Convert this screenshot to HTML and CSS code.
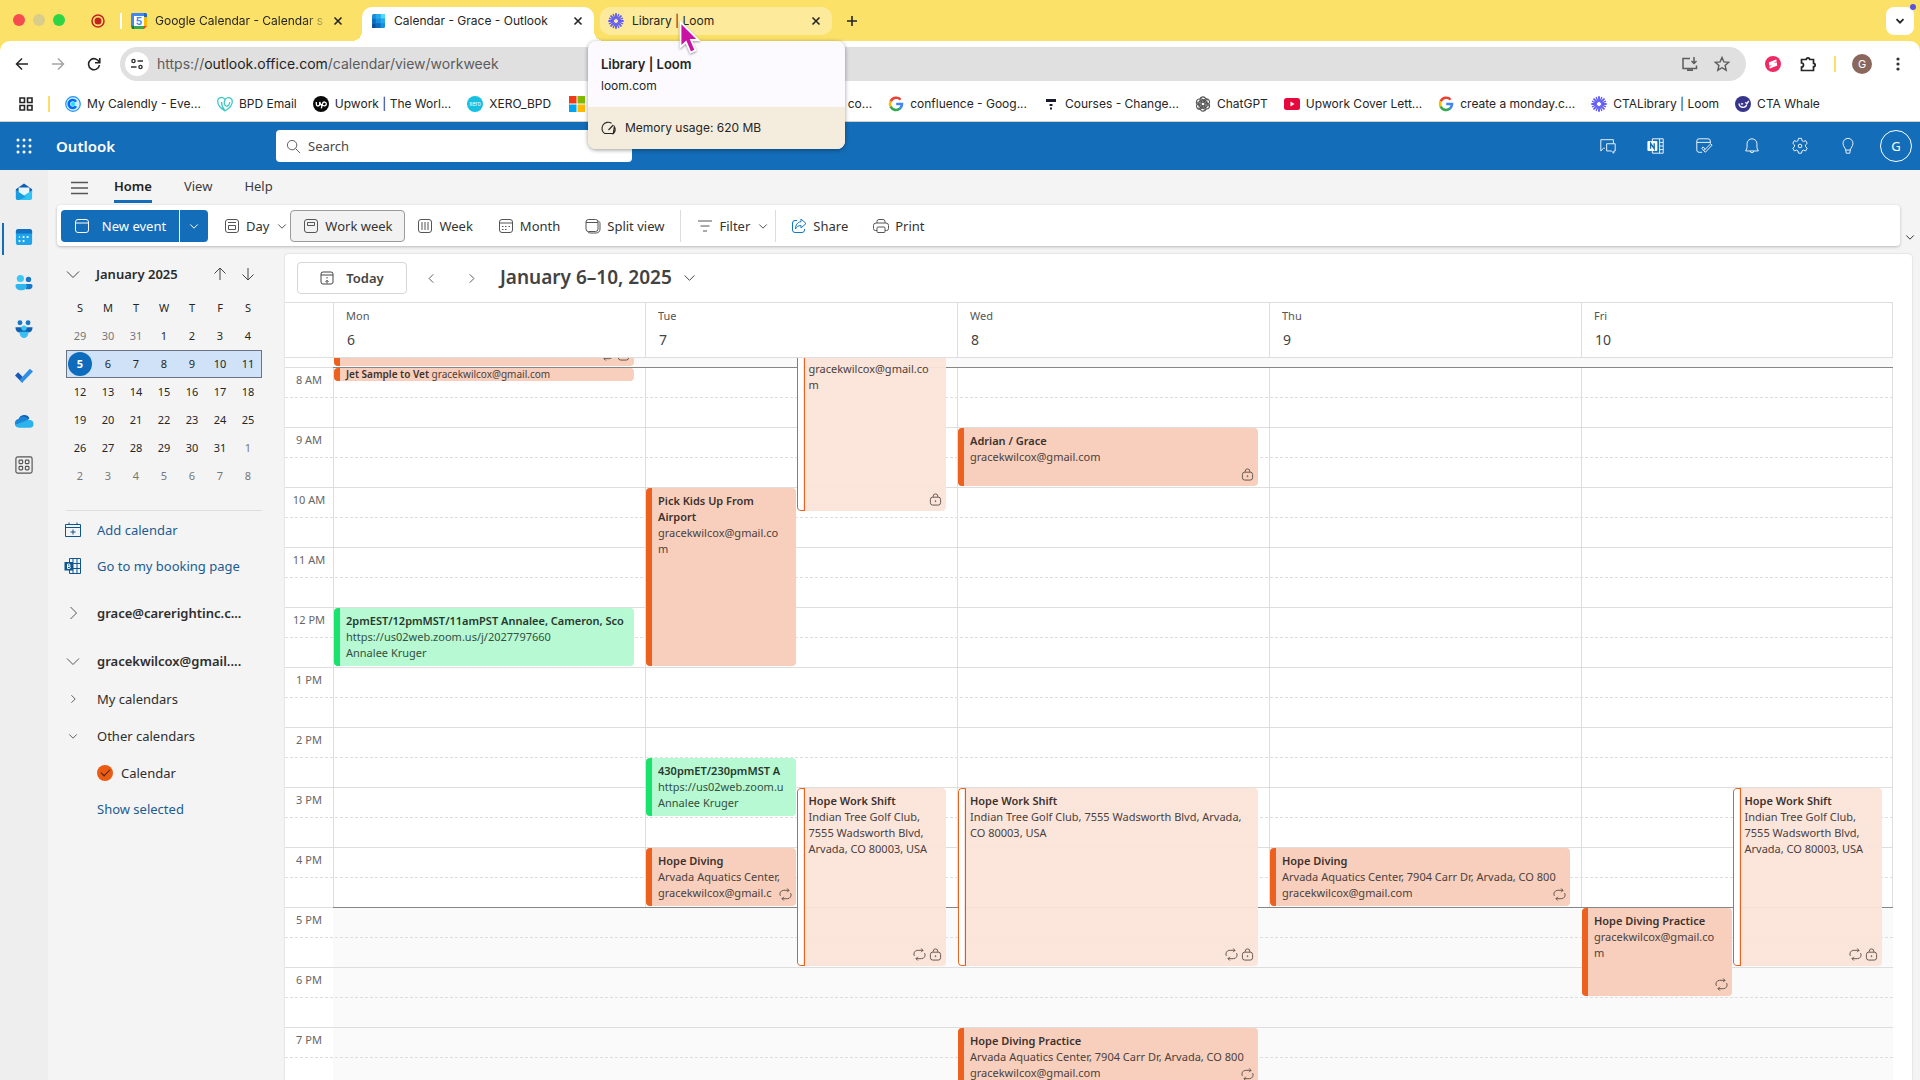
FILE: index.html
```html
<!DOCTYPE html>
<html lang="en">
<head>
<meta charset="utf-8">
<meta name="viewport" content="width=device-width, initial-scale=1">
<title>Calendar - Grace - Outlook</title>
<link rel="stylesheet" href="styles.css">
</head>
<body>
<svg class="sprite" aria-hidden="true">
  <symbol id="i-close" viewBox="0 0 10 10"><path d="M1.5 1.5l7 7M8.5 1.5l-7 7" stroke-width="1.6"/></symbol>
  <symbol id="i-loom" viewBox="0 0 16 16"><g stroke="#625df5" stroke-width="1.9" stroke-linecap="round" fill="none"><path d="M8 1v4.2M8 10.8V15M1 8h4.2M10.800 8H15M3.050 3.050l3 3M9.950 9.950l3 3M3.050 12.950l3-3M9.950 6.050l3-3"/><path stroke-width="1.400" d="M5.300 1.500l1.500 3.700M9.200 10.800l1.500 3.700M1.500 10.700l3.700-1.500M10.800 6.800l3.700-1.500M1.500 5.300l3.700 1.500M10.800 9.200l3.700 1.500M5.300 14.500l1.500-3.700M9.200 5.200l1.500-3.700"/></g></symbol>
  <symbol id="i-google" viewBox="0 0 16 16"><g fill="none" stroke-width="2.600"><path stroke="#ea4335" d="M12.600 3.600A6 6 0 0 0 2.700 5.400"/><path stroke="#fbbc05" d="M2.800 5.200a6 6 0 0 0 0 5.600"/><path stroke="#34a853" d="M2.700 10.600a6 6 0 0 0 9.300 2"/><path stroke="#4285f4" d="M11.800 12.700A6 6 0 0 0 14 8H8.200"/></g></symbol>
  <symbol id="i-down" viewBox="0 0 16 16"><path d="M2 5.500l6 6 6-6"/></symbol>
  <symbol id="i-right" viewBox="0 0 16 16"><path d="M5.500 2l6 6-6 6"/></symbol>
  <symbol id="i-left" viewBox="0 0 16 16"><path d="M10.500 2l-6 6 6 6"/></symbol>
  <symbol id="i-repeat" viewBox="0 0 14 14"><path d="M8.800.500l2 2-2 2M10.800 2.500H5A4 4 0 0 0 1.500 8.500M5.200 13.500l-2-2 2-2M3.200 11.500H9a4 4 0 0 0 3.500-6"/></symbol>
  <symbol id="i-lock" viewBox="0 0 14 14"><path d="M4.500 4.500V3.500a2.500 2.500 0 0 1 5 0v1"/><rect x="1.500" y="4.500" width="11" height="8.500" rx="2.500"/><circle cx="7" cy="8.800" r=".5"/></symbol>
  <symbol id="i-calbox" viewBox="0 0 16 16"><rect x="1.500" y="1.500" width="13" height="13" rx="2.500"/></symbol>
</svg>

<div class="browser">
  <header class="tabstrip">
    <div class="lights"><i class="light light--red"></i><i class="light light--dim"></i><i class="light light--green"></i></div>
    <svg class="record" viewBox="0 0 14 14"><circle cx="7" cy="7" r="6" fill="none" stroke="#c4221f" stroke-width="1.500"/><circle cx="7" cy="7" r="3.500" fill="#c4221f" stroke="none"/></svg>
    <div class="tab tab--first">
      <svg class="favicon" viewBox="0 0 16 16"><path fill="#4285f4" d="M1 0h12v3H3v10H0V1z"/><path fill="#1967d2" d="M13 0h2l1 1v3h-3z"/><path fill="#fbbc04" d="M13 4h3v9h-3z"/><path fill="#34a853" d="M3 13h10v3H3z"/><path fill="#188038" d="M0 13h3v3H1z"/><path fill="#ea4335" d="M13 13h3l-3 3z"/><path fill="#fff" d="M3 3h10v10H3z"/><text x="8" y="11.500" text-anchor="middle" font-size="10" font-weight="700" fill="#4285f4">5</text></svg>
      <span class="tab__title tab__title--fade">Google Calendar - Calendar s</span>
      <button class="tab__close" aria-label="Close tab"><svg><use href="#i-close"/></svg></button>
    </div>
    <div class="tab tab--active">
      <svg class="favicon" viewBox="0 0 16 16"><rect x="2" y="1" width="13" height="14" rx="1.500" fill="#1490df"/><path fill="#50d9ff" d="M10.500 1H15v4.700h-4.500z"/><path fill="#28a8ea" d="M5.800 1h4.700v4.700H5.800zM10.500 5.700H15v4.600h-4.500z"/><path fill="#0a4f9e" d="M2 10.300h3.800V15H2z"/><path fill="#0f6cbd" d="M2 5.700h3.800v4.600H2zM5.800 10.300h4.700V15H5.800z"/></svg>
      <span class="tab__title">Calendar - Grace - Outlook</span>
      <button class="tab__close" aria-label="Close tab"><svg><use href="#i-close"/></svg></button>
    </div>
    <div class="tab tab--hover">
      <svg class="favicon"><use href="#i-loom"/></svg>
      <span class="tab__title">Library | Loom</span>
      <button class="tab__close" aria-label="Close tab"><svg><use href="#i-close"/></svg></button>
    </div>
    <button class="newtab" aria-label="New tab"><svg viewBox="0 0 12 12"><path d="M6 1v10M1 6h10" stroke-width="1.600"/></svg></button>
    <button class="tabsearch" aria-label="Search tabs"><svg viewBox="0 0 10 10"><path d="M1.500 3.200L5 6.700l3.500-3.500" stroke-width="1.800"/></svg></button>
  </header>

  <div class="toolbar">
    <button class="nav" aria-label="Back"><svg viewBox="0 0 14 14"><path d="M13 7H1.500M7 1.500L1.500 7 7 12.500" stroke-width="1.500"/></svg></button>
    <button class="nav nav--off" aria-label="Forward"><svg viewBox="0 0 14 14"><path d="M1 7h11.500M7 1.500L12.500 7 7 12.500" stroke-width="1.500"/></svg></button>
    <button class="nav" aria-label="Reload"><svg viewBox="0 0 14 14"><path d="M12.300 5.500A5.500 5.500 0 1 0 12.500 8M12.800 1v4.800H8" stroke-width="1.600"/></svg></button>
    <div class="urlbar">
      <button class="site" aria-label="Site information"><svg viewBox="0 0 14 14"><circle cx="3.500" cy="4" r="1.600" stroke-width="1.400"/><path d="M7.500 4H13M1 10h5.500" stroke-width="1.600"/><circle cx="10.500" cy="10" r="1.600" stroke-width="1.400"/></svg></button>
      <span class="url">https://<b>outlook.office.com</b>/calendar/view/workweek</span>
      <button class="urlicon" aria-label="Install Outlook"><svg viewBox="0 0 16 16"><path d="M8 2.500H1v10h13.500V9.500M12 1v6M9.500 5L12 7.500 14.500 5" stroke-width="1.500"/><path d="M5 13.200h6v1.800H5z" fill="currentColor" stroke="none"/></svg></button>
      <button class="urlicon" aria-label="Bookmark this page"><svg viewBox="0 0 16 16"><path d="M8 1.500l1.900 4.400 4.800.4-3.600 3.200 1.100 4.700L8 11.700l-4.200 2.500 1.100-4.700-3.600-3.200 4.800-.4z" stroke-width="1.400"/></svg></button>
    </div>
    <button class="ext" aria-label="Extension"><svg viewBox="0 0 16 16"><circle cx="8" cy="8" r="8" fill="#ee2a64" stroke="none"/><path d="M4 7.300l7.500-3M4.500 11.700l7.500-3M4 7.300h8M4 8.700h8" stroke="#fff" stroke-width="1.800"/></svg></button>
    <button class="ext" aria-label="Extensions"><svg viewBox="0 0 16 16"><path d="M1.500 3.500h4.800a1.700 1.700 0 0 1 3.400 0h3.800v3.800a1.700 1.700 0 0 1 0 3.400v3.800h-12v-3.500a2 2 0 0 0 0-4z" stroke-width="1.700"/></svg></button>
    <i class="bar-sep"></i>
    <button class="profile" aria-label="Profile">G</button>
    <button class="dots" aria-label="Menu"><svg viewBox="0 0 4 16"><g fill="#333" stroke="none"><circle cx="2" cy="3" r="1.600"/><circle cx="2" cy="8" r="1.600"/><circle cx="2" cy="13" r="1.600"/></g></svg></button>
  </div>

  <nav class="bookmarks" aria-label="Bookmarks">
    <button class="apps" aria-label="Apps"><svg viewBox="0 0 14 14"><path d="M1 1h4.500v4.500H1zM8.500 1H13v4.500H8.500zM1 8.500h4.500V13H1zM8.500 8.500H13V13H8.500z" stroke-width="1.600"/></svg></button>
    <i class="bar-sep"></i>
    <a class="bm" href="#"><svg viewBox="0 0 16 16"><circle cx="8" cy="8" r="7.300" fill="#d5ecff" stroke="#2196f3" stroke-width="1.200"/><path d="M11 10.300A4 4 0 1 1 11 5.700" fill="none" stroke="#006bff" stroke-width="2.600"/><circle cx="8" cy="8" r="2" fill="#0ae8f0"/></svg>My Calendly - Eve...</a>
    <a class="bm" href="#"><svg viewBox="0 0 16 16"><path fill="none" stroke="#3fc9c4" stroke-width="1.300" d="M8 15C3 12 .7 8.500.700 5.500a3.800 3.800 0 0 1 7.300-1.700M8 15c5-3 7.300-6.500 7.300-9.500a3.800 3.800 0 0 0-6.800-2.300C6.500 6 7 9 9 10s4-2 3.500-4M8 15C5.500 12 4.500 9 4.500 6"/></svg>BPD Email</a>
    <a class="bm" href="#"><svg viewBox="0 0 16 16"><circle cx="8" cy="8" r="8" fill="#0a0a0a"/><path d="M3.300 6v2.300a1.700 1.700 0 0 0 3.400 0V6q1 3.200 2.700 4.500M8.300 12.300l1.300-4.800a1.900 1.900 0 1 1 1.700 2.300c-1 0-2-.8-2.700-1.800" fill="none" stroke="#fff" stroke-width="1.300"/></svg>Upwork | The Worl...</a>
    <a class="bm" href="#"><svg viewBox="0 0 16 16"><circle cx="8" cy="8" r="8" fill="#17bfe0"/><text x="8" y="10" font-size="5.500" text-anchor="middle" fill="#fff">xero</text></svg>XERO_BPD</a>
    <a class="bm bm--wide" href="#"><svg viewBox="0 0 16 16"><path fill="#f03a17" d="M0 0h7.500v7.500H0z"/><path fill="#7fba00" d="M8.500 0H16v7.500H8.500z"/><path fill="#00a4ef" d="M0 8.500h7.500V16H0z"/><path fill="#ffb900" d="M8.500 8.500H16V16H8.500z"/></svg><span>co...</span></a>
    <a class="bm" href="#"><svg><use href="#i-google"/></svg>confluence - Goog...</a>
    <a class="bm" href="#"><svg viewBox="0 0 16 16"><path fill="#1b1b2f" d="M3 3h10v3H3zM6.500 8h3v2h-3zM7 11.500h2v2H7z"/></svg>Courses - Change...</a>
    <a class="bm" href="#"><svg viewBox="0 0 16 16"><g fill="none" stroke="#555" stroke-width="1.100"><path id="petal" d="M5 3.200a3 3 0 0 1 5.700-.5 3 3 0 0 1 2 1.600M5 3.200v5.200l3 1.700M10.600 5L7.500 3.300 5 4.800"/><use href="#petal" transform="rotate(60 8 8)"/><use href="#petal" transform="rotate(120 8 8)"/><use href="#petal" transform="rotate(180 8 8)"/><use href="#petal" transform="rotate(240 8 8)"/><use href="#petal" transform="rotate(300 8 8)"/></g></svg>ChatGPT</a>
    <a class="bm" href="#"><svg viewBox="0 0 16 16"><rect y="2" width="16" height="12" rx="2.500" fill="#e6093d"/><path fill="#fff" d="M6.500 5.500l4 2.500-4 2.500z"/></svg>Upwork Cover Lett...</a>
    <a class="bm" href="#"><svg><use href="#i-google"/></svg>create a monday.c...</a>
    <a class="bm" href="#"><svg><use href="#i-loom"/></svg>CTALibrary | Loom</a>
    <a class="bm" href="#"><svg viewBox="0 0 16 16"><circle cx="8" cy="8" r="8" fill="#37348b"/><path d="M4 7.500a4 4 0 0 0 7.800 1M10 6.500l2 1 1.800-2.500M6 7.500q1 1 2 0" fill="none" stroke="#fff" stroke-width="1.300"/></svg>CTA Whale</a>
  </nav>

  <div class="hovercard" role="tooltip">
    <div class="hovercard__top"><strong>Library | Loom</strong><span>loom.com</span></div>
    <div class="hovercard__mem"><svg viewBox="0 0 14 14"><path d="M2.700 12.500A5.600 5.600 0 0 1 9.500 2.300M12.300 5.500a5.600 5.600 0 0 1-1 7zM2.700 12.500h8.600M6.500 9l4.800-5" stroke-width="1.100"/></svg>Memory usage: 620 MB</div>
  </div>
  <svg class="cursor" viewBox="0 0 22 34"><path d="M1.500 2v25l5.500-5 4.500 10.500 5-2.200-4.400-10.300h7.400z" fill="#c913a5" stroke="#fff" stroke-width="1.800"/></svg>
</div>

<div class="suite">
  <button class="waffle" aria-label="App launcher"><svg viewBox="0 0 16 16"><g fill="#fff"><circle cx="2" cy="2" r="1.500"/><circle cx="8" cy="2" r="1.500"/><circle cx="14" cy="2" r="1.500"/><circle cx="2" cy="8" r="1.500"/><circle cx="8" cy="8" r="1.500"/><circle cx="14" cy="8" r="1.500"/><circle cx="2" cy="14" r="1.500"/><circle cx="8" cy="14" r="1.500"/><circle cx="14" cy="14" r="1.500"/></g></svg></button>
  <span class="brand">Outlook</span>
  <label class="search"><svg viewBox="0 0 16 16"><circle cx="6.500" cy="6.500" r="5"/><path d="M10.200 10.200L15 15"/></svg><input type="search" placeholder="Search" aria-label="Search"></label>
  <div class="suite__icons">
    <button aria-label="Chat"><svg viewBox="0 0 20 20"><path d="M6.500 12.500H5L2 15.500V3h14v4M8.500 7.500H18v8h-1.500V18l-3-2.500h-5z"/></svg></button>
    <button aria-label="OneNote feed"><svg viewBox="0 0 20 20"><path d="M6 4.500V2h12v16H6v-2.500M14 2v16M14 6h4M14 10h4M14 14h4"/><path d="M1 5h10v10H1z" fill="#fff"/><path d="M4 13V7l4 6V7" stroke="#146db8" stroke-width="1.500"/></svg></button>
    <button aria-label="My day"><svg viewBox="0 0 20 20"><path d="M8 17H4.500A2.500 2.500 0 0 1 2 14.500v-10A2.500 2.500 0 0 1 4.500 2h10A2.500 2.500 0 0 1 17 4.500V7M2 6h15M7.500 12.500l1.500-1.500 2.500 2.500 6-6L19 9l-7.500 8z"/><path d="M11.500 13.500L9.500 15"/></svg></button>
    <button aria-label="Notifications"><svg viewBox="0 0 20 20"><path d="M10 2a5.500 5.500 0 0 0-5.500 5.500V12L3 15.500h14L15.500 12V7.500A5.500 5.500 0 0 0 10 2zM8 15.500a2 2 0 0 0 4 0"/></svg></button>
    <button aria-label="Settings"><svg viewBox="0 0 20 20"><path d="M8.300 1.500h3.400l.5 2.500 1.600.9 2.500-.8 1.700 3-1.900 1.700v1.900l1.900 1.700-1.700 3-2.500-.8-1.600.9-.5 2.500H8.300l-.5-2.500-1.600-.9-2.500.8-1.700-3 1.900-1.700V8.800L2 7.100l1.700-3 2.500.8L7.800 4z" stroke-linejoin="round"/><circle cx="10" cy="10" r="2"/></svg></button>
    <button aria-label="Tips"><svg viewBox="0 0 20 20"><path d="M7.500 14.500C7 12 4.500 10.500 4.500 7a5.500 5.500 0 0 1 11 0c0 3.500-2.500 5-3 7.500zM7.500 14.500l.5 3.500h4l.5-3.500"/></svg></button>
  </div>
  <button class="account" aria-label="Account">G</button>
</div>

<div class="app">
  <nav class="rail" aria-label="Apps">
    <a href="#" aria-label="Mail"><svg viewBox="0 0 20 20"><path fill="#0f5fb3" d="M1 7l9-6.500L19 7v3H1z"/><path fill="#e8f6ff" d="M4 5h12v7H4z"/><path fill="#31c4f3" d="M1 8l9 6 9-6v9a2 2 0 0 1-2 2H3a2 2 0 0 1-2-2z"/><path fill="#1a9be0" d="M1 8l11 7.500L4 19H3a2 2 0 0 1-2-2z"/></svg></a>
    <a class="is-active" href="#" aria-label="Calendar"><svg viewBox="0 0 20 20"><rect x="1" y="1" width="18" height="18" rx="3" fill="#1fa3ea"/><path fill="#1273c4" d="M1 4a3 3 0 0 1 3-3h12a3 3 0 0 1 3 3v2H1z"/><g fill="#fff"><circle cx="9.500" cy="10" r="1.200"/><circle cx="14" cy="10" r="1.200"/><circle cx="5" cy="14.500" r="1.200"/><circle cx="9.500" cy="14.500" r="1.200"/><circle cx="5" cy="10" r=".8"/></g></svg></a>
    <a href="#" aria-label="People"><svg viewBox="0 0 20 20"><circle cx="6" cy="5" r="4" fill="#3cc9f5"/><circle cx="15" cy="6" r="3" fill="#1578c9"/><path fill="#1578c9" d="M12 11h5.500a2 2 0 0 1 2 2c0 3-2 4-4.500 4h-3z"/><path fill="#2fb6ef" d="M2 11h9a2 2 0 0 1 2 2c0 3.500-2.500 5-6 5s-6.500-1.500-6.500-5A2 2 0 0 1 2 11z"/></svg></a>
    <a href="#" aria-label="Groups"><svg viewBox="0 0 20 20"><circle cx="5.500" cy="3" r="2.700" fill="#1578c9"/><circle cx="14.500" cy="3" r="2.700" fill="#1578c9"/><path fill="#1160b0" d="M.500 8h19c0 4-2 6-5 6h-9c-3 0-5-2-5-6z"/><circle cx="10" cy="9" r="3" fill="#39c5f4"/><path fill="#39bff0" d="M5 13h10c0 4-2 7-5 7s-5-3-5-7z"/></svg></a>
    <a href="#" aria-label="To Do"><svg viewBox="0 0 20 20"><path fill="#1859b5" d="M0 10.500l3.500-3.500L10 13.500 8 18.500z"/><path fill="#2f8fe6" d="M8 18.500l-3-3L16.500 3 20 6z"/></svg></a>
    <a href="#" aria-label="OneDrive"><svg viewBox="0 0 20 20"><path fill="#0d5cb0" d="M4 8a6.500 6.500 0 0 1 12-1l-6 6z"/><path fill="#1b86d8" d="M4.500 7.500a5 5 0 0 0-4 7.500L15 9A6 6 0 0 0 4.500 7.500z"/><path fill="#2bb3ee" d="M0 14.500C1 17 3 17.500 5 17.500h11.500A4.200 4.200 0 0 0 16 9c-1.500-.5-3 0-4 .7z"/></svg></a>
    <a class="more" href="#" aria-label="More apps"><svg viewBox="0 0 20 20"><rect x="1" y="1" width="18" height="18" rx="2"/><rect x="4.500" y="4.500" width="4" height="4" rx="1"/><rect x="11.500" y="4.500" width="4" height="4" rx="1"/><rect x="4.500" y="11.500" width="4" height="4" rx="1"/><rect x="11.500" y="11.500" width="4" height="4" rx="1"/></svg></a>
  </nav>

  <div class="main">
    <nav class="menu" aria-label="Ribbon tabs">
      <button class="burger" aria-label="Toggle pane"><svg viewBox="0 0 17 14"><path d="M0 1.500h17M0 7h17M0 12.500h17" stroke-width="1.300"/></svg></button>
      <a class="menu__tab is-active" href="#">Home</a>
      <a class="menu__tab" href="#">View</a>
      <a class="menu__tab" href="#">Help</a>
    </nav>

    <div class="ribbonrow">
      <div class="ribbon">
        <div class="split">
          <button class="split__main"><svg viewBox="0 0 16 16"><use href="#i-calbox"/><path d="M1.500 5h13"/></svg>New event</button>
          <button class="split__more" aria-label="More new items"><svg class="chev"><use href="#i-down"/></svg></button>
        </div>
        <button class="cmd cmd--day"><svg viewBox="0 0 16 16"><use href="#i-calbox"/><path d="M4 4.500h8M4.500 7.500h7v4h-7z"/></svg>Day<svg class="chev"><use href="#i-down"/></svg></button>
        <button class="cmd cmd--on"><svg viewBox="0 0 16 16"><use href="#i-calbox"/><path d="M4.500 4.500h7v3h-7z"/></svg>Work week</button>
        <button class="cmd"><svg viewBox="0 0 16 16"><use href="#i-calbox"/><path d="M5 4v8M8 4v8M11 4v8"/></svg>Week</button>
        <button class="cmd"><svg viewBox="0 0 16 16"><use href="#i-calbox"/><path d="M1.500 5h13M7 8.500h1.500M10.500 8.500H12M4 8.500h1.500M4 11.500h1.500M7 11.500h1.500"/></svg>Month</button>
        <button class="cmd"><svg viewBox="0 0 16 16"><rect x="1" y="1.500" width="12" height="12" rx="2.500"/><path d="M1 4.500h12M13.500 3c1 .5 1.500 1.500 1.500 2.500V11c0 2.500-1.500 4-4 4H5c-1 0-2-.5-2.500-1.500"/></svg>Split view</button>
        <i class="rsep"></i>
        <button class="cmd cmd--filter"><svg viewBox="0 0 16 16"><path d="M1 3h14M3.500 8h9M6 13h4"/></svg>Filter<svg class="chev"><use href="#i-down"/></svg></button>
        <i class="rsep"></i>
        <button class="cmd"><svg viewBox="0 0 16 16"><path d="M6 2.500H4A2.500 2.500 0 0 0 1.500 5v7A2.500 2.500 0 0 0 4 14.500h7a2.500 2.500 0 0 0 2.500-2.500v-1M10 1l5 4.500-5 4.500V7.500C7 7.500 5.500 9 4.500 11c0-4 2-7 5.500-7.300z" stroke="#1177c9"/></svg>Share</button>
        <button class="cmd"><svg viewBox="0 0 16 16"><path d="M4 5V3.500A2 2 0 0 1 6 1.500h4a2 2 0 0 1 2 2V5M4 12.500H2.500a2 2 0 0 1-2-2V7.500A2.500 2.500 0 0 1 3 5h10a2.500 2.500 0 0 1 2.500 2.500v3a2 2 0 0 1-2 2H12"/><rect x="4" y="9" width="8" height="5.500" rx="1"/></svg>Print</button>
      </div>
      <button class="collapse" aria-label="Collapse ribbon"><svg class="chev"><use href="#i-down"/></svg></button>
    </div>

    <div class="content">
      <aside class="pane">
        <div class="month">
          <svg class="ico"><use href="#i-down"/></svg><h2>January 2025</h2>
          <button aria-label="Previous month"><svg viewBox="0 0 14 14"><path d="M7 13V1M1.500 6.500L7 1l5.500 5.500"/></svg></button>
          <button aria-label="Next month"><svg viewBox="0 0 14 14"><path d="M7 1v12M1.500 7.500L7 13l5.500-5.500"/></svg></button>
        </div>
        <table class="mini">
          <thead><tr><th>S</th><th>M</th><th>T</th><th>W</th><th>T</th><th>F</th><th>S</th></tr></thead>
          <tbody>
            <tr><td class="out">29</td><td class="out">30</td><td class="out">31</td><td>1</td><td>2</td><td>3</td><td>4</td></tr>
            <tr class="sel"><td><b>5</b></td><td>6</td><td>7</td><td>8</td><td>9</td><td>10</td><td>11</td></tr>
            <tr><td>12</td><td>13</td><td>14</td><td>15</td><td>16</td><td>17</td><td>18</td></tr>
            <tr><td>19</td><td>20</td><td>21</td><td>22</td><td>23</td><td>24</td><td>25</td></tr>
            <tr><td>26</td><td>27</td><td>28</td><td>29</td><td>30</td><td>31</td><td class="out">1</td></tr>
            <tr><td class="out">2</td><td class="out">3</td><td class="out">4</td><td class="out">5</td><td class="out">6</td><td class="out">7</td><td class="out">8</td></tr>
          </tbody>
        </table>
        <hr>
        <a class="row row--link" href="#"><svg class="ico" viewBox="0 0 16 16"><path d="M.500 2.500h15v12H.500zM.500 5.500h15M4 .500v2M12 .500v2M8 7.500v5M5.500 10h5"/></svg>Add calendar</a>
        <a class="row row--link" href="#"><svg class="ico" viewBox="0 0 16 16"><path d="M4.500.500h11v15h-11zM4.500 5.500h11M4.500 10.500h11M8 .500v15M12 .500v15"/><path d="M-.500 4h8.500v8.500H-.500z" fill="#0f548c" stroke="none"/><path d="M2.500 6v4.500h1.700a1.100 1.100 0 0 0 0-2.300H2.500h1.400a1.100 1.100 0 0 0 0-2.200z" stroke="#fff"/></svg>Go to my booking page</a>
        <div class="accounts">
          <button class="row row--acct"><svg class="ico"><use href="#i-right"/></svg>grace@carerightinc.c...</button>
          <button class="row row--acct"><svg class="ico"><use href="#i-down"/></svg>gracekwilcox@gmail....</button>
        </div>
        <button class="row row--sub"><svg class="ico"><use href="#i-right"/></svg>My calendars</button>
        <button class="row row--sub"><svg class="ico"><use href="#i-down"/></svg>Other calendars</button>
        <label class="row row--check"><input type="checkbox" checked>Calendar</label>
        <a class="row row--link row--deep" href="#">Show selected</a>
      </aside>

      <section class="card">
        <div class="card__bar">
          <button class="today"><svg viewBox="0 0 14 14"><rect x="1" y="1" width="12" height="12" rx="2"/><path d="M1 4h12M7 6v1.500M7 12.500v-3M5.500 10.800L7 9.300l1.500 1.500"/></svg>Today</button>
          <button class="step" aria-label="Previous week"><svg><use href="#i-left"/></svg></button>
          <button class="step" aria-label="Next week"><svg><use href="#i-right"/></svg></button>
          <button class="range">January 6–10, 2025<svg><use href="#i-down"/></svg></button>
        </div>
        <div class="cal">
          <div class="dayheads">
            <div></div>
            <div class="dayhead">Mon<b>6</b></div>
            <div class="dayhead">Tue<b>7</b></div>
            <div class="dayhead">Wed<b>8</b></div>
            <div class="dayhead">Thu<b>9</b></div>
            <div class="dayhead">Fri<b>10</b></div>
          </div>
          <div class="scroll">
            <div class="timegrid">
              <div class="hours">
                <div class="hour hour--off"><span></span><i></i></div>
                <div class="hour hour--edge"><span>8 AM</span><i></i></div>
                <div class="hour"><span>9 AM</span><i></i></div>
                <div class="hour"><span>10 AM</span><i></i></div>
                <div class="hour"><span>11 AM</span><i></i></div>
                <div class="hour"><span>12 PM</span><i></i></div>
                <div class="hour"><span>1 PM</span><i></i></div>
                <div class="hour"><span>2 PM</span><i></i></div>
                <div class="hour"><span>3 PM</span><i></i></div>
                <div class="hour"><span>4 PM</span><i></i></div>
                <div class="hour hour--off hour--edge"><span>5 PM</span><i></i></div>
                <div class="hour hour--off"><span>6 PM</span><i></i></div>
                <div class="hour hour--off"><span>7 PM</span><i></i></div>
              </div>
              <div class="days">
                <div class="day">
                  <div class="ev t0700"><span class="ev__icons"><svg><use href="#i-repeat"/></svg><svg><use href="#i-lock"/></svg></span></div>
                  <div class="ev ev--short t0800"><b>Jet Sample to Vet</b> gracekwilcox@gmail.com</div>
                  <div class="ev ev--green t1200"><b class="nw">2pmEST/12pmMST/11amPST Annalee, Cameron, Sco</b><span class="nw">https://us02web.zoom.us/j/2027797660</span><span class="nw">Annalee Kruger</span></div>
                </div>
                <div class="day">
                  <div class="ev ev--tent ev--grey ev--right ev--cont t0750"><span>gracekwilcox@gmail.com</span><span class="ev__icons"><svg><use href="#i-lock"/></svg></span></div>
                  <div class="ev ev--left t1000"><b>Pick Kids Up From Airport</b><span>gracekwilcox@gmail.com</span></div>
                  <div class="ev ev--green ev--left t1430"><b class="nw">430pmET/230pmMST A</b><span class="nw">https://us02web.zoom.u</span><span class="nw">Annalee Kruger</span></div>
                  <div class="ev ev--left t1600"><b class="nw">Hope Diving</b><span class="nw">Arvada Aquatics Center,</span><span class="nw">gracekwilcox@gmail.c</span><span class="ev__icons"><svg><use href="#i-repeat"/></svg></span></div>
                  <div class="ev ev--tent ev--grey ev--right t1500"><b>Hope Work Shift</b><span>Indian Tree Golf Club, 7555 Wadsworth Blvd, Arvada, CO 80003, USA</span><span class="ev__icons"><svg><use href="#i-repeat"/></svg><svg><use href="#i-lock"/></svg></span></div>
                </div>
                <div class="day">
                  <div class="ev t0900"><b>Adrian / Grace</b><span>gracekwilcox@gmail.com</span><span class="ev__icons"><svg><use href="#i-lock"/></svg></span></div>
                  <div class="ev ev--tent t1500"><b>Hope Work Shift</b><span>Indian Tree Golf Club, 7555 Wadsworth Blvd, Arvada, CO 80003, USA</span><span class="ev__icons"><svg><use href="#i-repeat"/></svg><svg><use href="#i-lock"/></svg></span></div>
                  <div class="ev t1900"><b>Hope Diving Practice</b><span class="nw">Arvada Aquatics Center, 7904 Carr Dr, Arvada, CO 800</span><span>gracekwilcox@gmail.com</span><span class="ev__icons"><svg><use href="#i-repeat"/></svg></span></div>
                </div>
                <div class="day">
                  <div class="ev t1600"><b>Hope Diving</b><span class="nw">Arvada Aquatics Center, 7904 Carr Dr, Arvada, CO 800</span><span>gracekwilcox@gmail.com</span><span class="ev__icons"><svg><use href="#i-repeat"/></svg></span></div>
                </div>
                <div class="day">
                  <div class="ev ev--left t1700"><b>Hope Diving Practice</b><span>gracekwilcox@gmail.com</span><span class="ev__icons"><svg><use href="#i-repeat"/></svg></span></div>
                  <div class="ev ev--tent ev--grey ev--right t1500"><b>Hope Work Shift</b><span>Indian Tree Golf Club, 7555 Wadsworth Blvd, Arvada, CO 80003, USA</span><span class="ev__icons"><svg><use href="#i-repeat"/></svg><svg><use href="#i-lock"/></svg></span></div>
                </div>
              </div>
            </div>
          </div>
        </div>
      </section>
    </div>
  </div>
</div>
</body>
</html>
```
FILE: styles.css
```css
:root {
  --blue: #146db8;
  --yellow: #fbe168;
  --orange: #eb611d;
  --line: #dedede;
  --ink: #333;
}

* { box-sizing: border-box; }

body {
  margin: 0;
  height: 100vh;
  overflow: hidden;
  display: flex;
  flex-direction: column;
  background: #f4f4f4;
  color: var(--ink);
  font: 13px/18px "Noto Sans", "Open Sans", sans-serif;
}

button, input { font: inherit; color: inherit; margin: 0; }
button { background: none; border: 0; padding: 0; display: flex; align-items: center; justify-content: center; }
a { color: inherit; text-decoration: none; }
svg { fill: none; stroke: currentColor; stroke-width: 1; flex: none; overflow: visible; display: block; }
svg text { stroke: none; }
.sprite { position: absolute; width: 0; height: 0; }

/* browser window */
.browser {
  position: relative;
  background: var(--yellow);
  color: #252525;
  font: 12px/16px Inter, "Liberation Sans", sans-serif;
  border-bottom: 1px solid #d3cfc5;
}
.tabstrip { height: 41px; display: flex; align-items: flex-start; }
.lights { display: flex; gap: 8px; padding: 14px 0 0 13px; }
.light { width: 12px; height: 12px; border-radius: 50%; }
.light--red { background: #f64c50; }
.light--dim { background: #d8cd8b; }
.light--green { background: #2bd546; }
.record { width: 14px; height: 14px; margin: 14px 0 0 26px; }
.tab { height: 34px; width: 232px; margin-top: 7px; padding: 0 8px 6px; display: flex; align-items: center; }
.tab--first { width: 240px; margin-left: 16px; margin-right: 1px; padding: 0 15px 6px 10px; position: relative; }
.tab--first::before { content: ""; width: 2px; height: 16px; background: #fff; position: absolute; left: -1px; top: 6px; }
.tab--active { background: #fff; border-radius: 10px 10px 0 0; position: relative; }
.tab--active::before, .tab--active::after { content: ""; position: absolute; bottom: 0; width: 10px; height: 10px; }
.tab--active::before { left: -10px; background: radial-gradient(circle at 0 0, transparent 10px, #fff 10px); }
.tab--active::after { right: -10px; background: radial-gradient(circle at 100% 0, transparent 10px, #fff 10px); }
.tab--hover { height: 28px; padding-bottom: 0; margin-left: 6px; border-radius: 10px; background: #fdea9b; }
.favicon { width: 16px; height: 16px; margin-right: 8px; }
.browser .favicon, .bm svg { stroke: none; }
.tab__title { flex: 1; white-space: nowrap; }
.tab__title--fade { -webkit-mask-image: linear-gradient(90deg, #000 150px, transparent 174px); mask-image: linear-gradient(90deg, #000 150px, transparent 174px); }
.tab__close { width: 16px; height: 16px; }
.tab__close svg { width: 10px; height: 10px; }
.newtab { width: 28px; height: 28px; margin: 7px 0 0 6px; }
.newtab svg { width: 12px; height: 12px; }
.tabsearch { width: 28px; height: 28px; margin: 7px 6px 0 auto; border-radius: 8px; background: #fff; position: relative; }
.tabsearch svg { width: 10px; height: 10px; }
.tabsearch::after { content: ""; position: absolute; right: -2px; top: -3px; width: 6px; height: 6px; border-radius: 50%; background: #5a52e0; }

.toolbar { height: 45px; padding: 0 14px 0 8px; display: flex; align-items: center; background: #fff; border-radius: 10px 10px 0 0; }
.nav { width: 28px; height: 28px; margin-right: 8px; }
.nav svg { width: 14px; height: 14px; }
.nav--off { color: #a5a5a5; }
.urlbar { flex: 1; height: 34px; margin-left: 4px; padding: 0 16px 0 5px; display: flex; align-items: center; border-radius: 17px; background: #e0e0e0; color: #5c5c5c; font-size: 14px; }
.site { width: 24px; height: 24px; border-radius: 50%; background: #fff; color: #333; margin-right: 8px; }
.site svg { width: 14px; height: 14px; }
.url { flex: 1; white-space: nowrap; }
.url b { font-weight: 400; color: #1f1f1f; }
.urlicon { width: 16px; height: 16px; margin-left: 16px; }
.urlicon svg { width: 16px; height: 16px; }
.ext { width: 16px; height: 16px; margin-left: 19px; }
.ext svg { width: 16px; height: 16px; }
.bar-sep { width: 2px; height: 16px; background: #fbdf66; }
.toolbar .bar-sep { margin: 0 16px 0 18px; }
.profile { width: 20px; height: 20px; border-radius: 50%; background: #8a675c; color: #fff; font-size: 11px; }
.dots { width: 16px; height: 16px; margin-left: 18px; }
.dots svg { width: 4px; height: 16px; }

.bookmarks { height: 35px; padding: 0 16px 0 19px; display: flex; align-items: center; gap: 16px; background: #fff; white-space: nowrap; overflow: hidden; }
.apps { width: 14px; height: 14px; }
.apps svg { width: 14px; height: 14px; }
.bookmarks .bar-sep { margin: 0 -1px 0 -1px; }
.bm { display: flex; align-items: center; gap: 6px; flex: none; }
.bm svg { width: 16px; height: 16px; }
.bm--wide { width: 303px; margin-left: 2px; justify-content: space-between; }

.hovercard { position: absolute; z-index: 2; left: 588px; top: 41px; width: 257px; border-radius: 8px; overflow: hidden; background: #fcfaff; box-shadow: 0 1px 4px rgba(0, 0, 0, .4); }
.hovercard__top { height: 66px; padding: 13px 13px 0; display: flex; flex-direction: column; gap: 4px; }
.hovercard__top strong { font-size: 13px; line-height: 20px; font-weight: 600; }
.hovercard__top span { line-height: 16px; }
.hovercard__mem { height: 42px; padding: 0 14px; display: flex; align-items: center; gap: 9px; background: #f4eddd; }
.hovercard__mem svg { width: 14px; height: 14px; }
.cursor { position: absolute; z-index: 3; left: 679px; top: 20px; width: 22px; height: 34px; filter: drop-shadow(0 1px 1px rgba(0, 0, 0, .4)); }

/* suite header */
.suite { height: 48px; flex: none; padding: 0 8px 0 0; display: flex; align-items: center; background: var(--blue); color: #fff; }
.waffle { width: 47px; height: 48px; }
.waffle svg { width: 16px; height: 16px; stroke: none; }
.brand { width: 229px; padding-left: 9px; font-size: 15px; font-weight: 600; }
.search { width: 356px; height: 32px; padding: 0 10px; display: flex; align-items: center; gap: 7px; background: #fff; color: #555; border-radius: 4px; }
.search svg { width: 15px; height: 15px; }
.search input { flex: 1; min-width: 0; border: 0; padding: 0; outline: 0; background: none; color: #444; }
.search input::placeholder { color: #484848; opacity: 1; }
.suite__icons { margin-left: auto; display: flex; }
.suite__icons button { width: 48px; height: 48px; }
.suite__icons svg { width: 18px; height: 18px; }
.account { width: 32px; height: 32px; margin-left: 8px; border: 1px solid #fff; border-radius: 50%; }

/* app frame */
.app { flex: 1; min-height: 0; display: flex; }
.rail { width: 48px; flex: none; background: #eee; display: flex; flex-direction: column; }
.rail a { height: 46px; display: flex; align-items: center; justify-content: center; position: relative; }
.rail a:first-child { height: 44px; }
.rail a.more { height: 42px; }
.rail svg { width: 18px; height: 18px; stroke: none; }
.rail .more svg { stroke: #555; stroke-width: 1.3; }
.rail .is-active::before { content: ""; position: absolute; left: 2px; top: 9px; width: 2px; height: 32px; background: var(--blue); }
.main { flex: 1; min-width: 0; display: flex; flex-direction: column; }

.menu { height: 35px; flex: none; padding-left: 23px; display: flex; align-items: center; color: #3b3b3b; }
.burger { width: 17px; margin-right: 26px; color: #555; }
.burger svg { width: 17px; height: 14px; }
.menu__tab { margin-right: 32px; height: 31px; line-height: 28px; border-bottom: 3px solid transparent; }
.menu__tab.is-active { font-weight: 600; color: #222; border-color: var(--blue); }

.ribbonrow { flex: none; display: flex; padding-left: 9px; }
.ribbon { flex: 1; height: 41px; padding: 0 4px; display: flex; align-items: center; background: #fff; border-radius: 4px; box-shadow: 0 1px 3px rgba(0, 0, 0, .25); }
.ribbon svg { width: 16px; height: 16px; }
.ribbon .chev, .collapse .chev { width: 10px; height: 10px; stroke-width: 1.6; }
.split { display: flex; height: 32px; margin-right: 9px; background: var(--blue); color: #fff; border-radius: 4px; }
.split__main { width: 118px; gap: 12px; }
.split__more { width: 29px; border-left: 1px solid #fff; }
.cmd { height: 32px; padding: 0 8px; gap: 6px; color: #333; margin-right: 7px; border: 1px solid transparent; border-radius: 4px; white-space: nowrap; }
.cmd svg { color: #555; }
.cmd--day { padding: 0 2px 0 6px; margin-right: 0; }
.cmd .chev { margin-left: 2px; }
.cmd--on { width: 115px; background: #f2f2f2; border-color: #9a9a9a; margin-right: 3px; }
.rsep { width: 1px; height: 32px; background: #dcdcdc; }
.cmd--filter { padding: 0 4px 0 7px; margin: 0 2px 0 8px; }
.rsep:last-of-type { margin-right: 6px; }
.collapse { width: 19px; align-items: flex-end; padding-bottom: 4px; margin-right: 1px; }

.content { flex: 1; min-height: 0; display: flex; padding: 8px 8px 0 0; }

/* left pane */
.pane { width: 237px; flex: none; padding: 0 23px 0 17px; }
.ico { width: 16px; height: 16px; }
.month { height: 40px; padding-right: 7px; display: flex; align-items: center; gap: 14px; color: #444; }
.month h2 { flex: 1; margin: 0 0 0 1px; font-size: 13px; font-weight: 600; color: #2b2b2b; white-space: nowrap; }
.month button { width: 14px; height: 14px; }
.month button svg { width: 14px; height: 14px; }
.mini { width: 196px; margin-left: 1px; border-collapse: collapse; table-layout: fixed; text-align: center; font-size: 11px; line-height: 16px; color: #262626; }
.mini th, .mini td { padding: 0; height: 28px; font-weight: 400; }
.mini .out { color: #777; }
.mini .sel { background: #cfe2f7; outline: 1px solid #6a7480; outline-offset: -1px; }
.mini b { display: block; width: 24px; margin: 0 auto; line-height: 24px; border-radius: 50%; background: #0f6cbd; color: #fff; }
.pane hr { margin: 20px 0 1px 1px; border: 0; border-top: 1px solid var(--line); width: 196px; }
.row { width: 100%; height: 37px; gap: 16px; display: flex; align-items: center; justify-content: flex-start; white-space: nowrap; color: #2e2e2e; }
.row--link { height: 36px; color: #1a5c92; }
.row--acct { height: 38px; font-weight: 600; }
.accounts { display: grid; gap: 10px; margin-top: 10px; }
.row .ico { color: #555; }
.row--link .ico { color: #0f548c; }
.row--sub .ico { width: 10px; height: 10px; margin: 0 3px; stroke-width: 1.500; }
.row--check { padding-left: 32px; gap: 8px; }
.row--check input { appearance: none; width: 16px; height: 16px; border-radius: 50%; background: #ea5b13; display: grid; place-items: center; }
.row--check input::before { content: ""; width: 8px; height: 4px; border: solid #40220f; border-width: 0 0 1px 1px; transform: translateY(-1px) rotate(-45deg); }
.row--deep { padding-left: 32px; }

/* calendar card */
.card { flex: 1; min-width: 0; display: flex; flex-direction: column; background: #fff; border-radius: 4px 4px 0 0; box-shadow: 0 0 2px rgba(0, 0, 0, .2); }
.card__bar { height: 48px; flex: none; padding-left: 12px; display: flex; align-items: center; gap: 8px; }
.today { width: 110px; height: 32px; gap: 12px; border: 1px solid #d6d6d6; border-radius: 4px; font-weight: 600; color: #444; }
.today svg { width: 14px; height: 14px; }
.step { width: 32px; height: 32px; color: #555; }
.step svg { width: 11px; height: 11px; stroke-width: 1.4; }
.range { margin-left: 5px; padding-bottom: 2px; gap: 11px; font-size: 19px; line-height: 26px; font-weight: 600; color: #424242; white-space: nowrap; }
.range svg { width: 13px; height: 13px; stroke-width: 1.2; }
.cal { flex: 1; min-height: 0; margin-right: 19px; display: flex; flex-direction: column; }
.dayheads { flex: none; display: grid; grid-template-columns: 48px repeat(5, 1fr); border-top: 1px solid var(--line); border-bottom: 1px solid var(--line); }
.dayhead { height: 54px; padding: 5px 12px 0; border-left: 1px solid var(--line); font-size: 11px; line-height: 16px; color: #555; }
.dayhead b { display: block; margin: 6px 0 0 1px; font-size: 14px; line-height: 20px; font-weight: 400; color: #444; }
.dayhead:last-child, .day:last-child { border-right: 1px solid var(--line); }

.scroll { flex: 1; min-height: 0; overflow: hidden; }
.timegrid { display: grid; margin-top: -51px; }
.hours, .days { grid-area: 1 / 1; min-width: 0; }
.hour { height: 60px; display: grid; grid-template-columns: 48px 1fr; position: relative; }
.hour::after { content: ""; position: absolute; left: 0; right: 0; top: 30px; height: 1px; background: repeating-linear-gradient(90deg, #dedede 0 3px, transparent 3px 5px); }
.hour span { padding-top: 3px; border-top: 1px solid var(--line); text-align: center; font-size: 11px; line-height: 18px; color: #666; }
.hour i { border-top: 1px solid var(--line); }
.hour--off i { background: #fafafa; }
.hour--edge i { border-color: #868686; }
.days { margin-left: 48px; display: grid; grid-template-columns: repeat(5, 1fr); }
.day { min-width: 0; border-left: 1px solid var(--line); padding-right: 11px; display: grid; grid-template-columns: 1fr 1fr; column-gap: 1px; grid-template-rows: repeat(156, 5px); }
.day:last-child { padding-right: 10px; }

/* events */
.ev { grid-column: 1 / -1; position: relative; min-width: 0; min-height: 0; margin: 1px 0; padding: 5px 10px 0 6px; overflow: hidden; border-left: 6px solid var(--orange); border-radius: 4px; background: #f8cfbc; color: #4b413c; font-size: 11px; line-height: 16px; }
.ev b { font-weight: 600; color: #3b322e; }
.ev > b, .ev > span { display: block; overflow-wrap: anywhere; }
.ev .nw { white-space: nowrap; }
.ev--left { grid-column: 1; }
.ev--right { grid-column: 2; }
.ev--green { border-color: #19e36c; background: #b6f9d2; color: #35503f; }
.ev--green b { color: #27382e; }
.ev--tent { padding-left: 12px; border: 0; background: linear-gradient(90deg, #fff 6px, rgba(251, 228, 217, .95) 6px); }
.ev--tent::before { content: ""; position: absolute; left: 0; top: 0; bottom: 0; width: 6px; border: 1px solid var(--orange); border-right-color: #8b7466; border-radius: 4px 0 0 4px; }
.ev--grey::before { border-color: var(--orange); border-left-color: #8b7c74; }
.ev--cont { padding-top: 3px; border-radius: 0 0 4px 4px; }
.ev--cont::before { border-top: 0; border-radius: 0 0 0 4px; }
.ev--short { padding-top: 0; font-size: 10px; line-height: 13px; white-space: nowrap; }
.ev.ev--short > b { display: inline; }
.ev .ev__icons { position: absolute; right: 4px; bottom: 5px; display: flex; gap: 3px; color: #5f504a; }
.ev__icons svg { width: 13px; height: 13px; }

/* start times, in five-minute rows counted from 7 AM */
.t0700 { grid-row: 1 / span 12; }
.t0750 { grid-row: 11 / span 31; }
.t0800 { grid-row: 13 / span 3; }
.t0900 { grid-row: 25 / span 12; }
.t1000 { grid-row: 37 / span 36; }
.t1200 { grid-row: 61 / span 12; }
.t1430 { grid-row: 91 / span 12; }
.t1500 { grid-row: 97 / span 36; }
.t1600 { grid-row: 109 / span 12; }
.t1700 { grid-row: 121 / span 18; }
.t1900 { grid-row: 145 / span 12; }
```
